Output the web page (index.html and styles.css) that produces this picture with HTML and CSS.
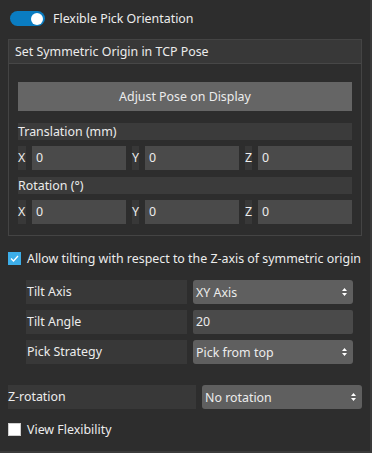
FILE: index.html
```html
<!DOCTYPE html>
<html lang="en">
<head>
  <meta charset="UTF-8" />
  <title>Flexible Pick Orientation</title>
  <link rel="stylesheet" href="styles.css">
</head>
<body>
  <div class="panel">

    <div class="toggle-row">
      <span class="toggle"><span class="knob"></span></span>
      <span>Flexible Pick Orientation</span>
    </div>

    <div class="group">
      <div class="group-title">Set Symmetric Origin in TCP Pose</div>
      <div class="group-body">
        <button class="btn">Adjust Pose on Display</button>

        <div class="sub-label">Translation (mm)</div>
        <div class="xyz">
          <span class="axis">X</span><span class="field">0</span>
          <span class="axis">Y</span><span class="field">0</span>
          <span class="axis">Z</span><span class="field">0</span>
        </div>

        <div class="sub-label rot">Rotation (°)</div>
        <div class="xyz">
          <span class="axis">X</span><span class="field">0</span>
          <span class="axis">Y</span><span class="field">0</span>
          <span class="axis">Z</span><span class="field">0</span>
        </div>
      </div>
    </div>

    <div class="check-row tilt-check">
      <span class="check on">
        <svg width="9" height="7" viewBox="0 0 9 7"><path d="M1 3.5 L3.5 6 L8 1" fill="none" stroke="#fff" stroke-width="1.3"/></svg>
      </span>
      <span>Allow tilting with respect to the Z-axis of symmetric origin</span>
    </div>

    <div class="tilt-grid">
      <div class="row-label">Tilt Axis</div>
      <div class="dropdown">XY Axis
        <svg width="5" height="8" viewBox="0 0 5 8"><path d="M2.5 0 L5 3 L0 3 Z M0 5 L5 5 L2.5 8 Z" fill="#fff"/></svg>
      </div>

      <div class="row-label">Tilt Angle</div>
      <div class="field value">20</div>

      <div class="row-label">Pick Strategy</div>
      <div class="dropdown">Pick from top
        <svg width="5" height="8" viewBox="0 0 5 8"><path d="M2.5 0 L5 3 L0 3 Z M0 5 L5 5 L2.5 8 Z" fill="#fff"/></svg>
      </div>
    </div>

    <div class="zrot-row">
      <div class="row-label">Z-rotation</div>
      <div class="dropdown">No rotation
        <svg width="5" height="8" viewBox="0 0 5 8"><path d="M2.5 0 L5 3 L0 3 Z M0 5 L5 5 L2.5 8 Z" fill="#fff"/></svg>
      </div>
    </div>

    <div class="check-row view-check">
      <span class="check"></span>
      <span>View Flexibility</span>
    </div>

  </div>
</body>
</html>
```

FILE: styles.css
```css
html, body {
  margin: 0;
  padding: 0;
}

body {
  width: 372px;
  height: 453px;
  background-color: #2d2d2d;
  font-family: 'Noto Sans', sans-serif;
  font-size: 12.4px;
  color: #ececec;
  overflow: hidden;
}

.panel {
  width: 372px;
  height: 453px;
  box-sizing: border-box;
  border-right: 2px solid #3a3a3a;
  border-bottom: 2px solid #3a3a3a;
  padding: 11px 8px 0 8px;
}

/* top switch */
.toggle-row {
  display: flex;
  align-items: center;
  gap: 8px;
  height: 15px;
  padding-left: 2px;
}

.toggle {
  display: flex;
  align-items: center;
  justify-content: flex-end;
  width: 35px;
  height: 15px;
  border-radius: 8px;
  background-color: #0a7cc1;
  padding: 0 2px;
  box-sizing: border-box;
}

.knob {
  width: 12px;
  height: 12px;
  border-radius: 50%;
  background: #fff;
}

/* group box */
.group {
  margin-top: 13px;
  width: 354px;
  box-sizing: border-box;
  border: 1px solid #444;
}

.group-title {
  height: 23px;
  line-height: 23px;
  padding-left: 6px;
  background-color: #383838;
  border-bottom: 1px solid #474747;
}

.group-body {
  padding: 18px 9px 11px 9px;
}

.btn {
  display: block;
  width: 100%;
  height: 29px;
  border: none;
  background-color: #656565;
  color: #ececec;
  font-family: inherit;
  font-size: inherit;
}

.sub-label {
  margin-top: 12px;
  height: 17px;
  line-height: 17px;
  background-color: #3b3b3b;
}

.sub-label.rot {
  margin-top: 7px;
}

.xyz {
  display: grid;
  grid-template-columns: 8px 1fr 7px 1fr 7px 1fr;
  gap: 6px;
  margin-top: 6px;
  height: 24px;
}

.axis {
  background-color: #383838;
  line-height: 24px;
}

.field {
  background-color: #4a4a4a;
  line-height: 24px;
  padding-left: 4px;
}

/* checkboxes */
.check-row {
  display: flex;
  align-items: center;
  gap: 6px;
  height: 13px;
}

.tilt-check {
  margin-top: 16px;
}

.view-check {
  margin-top: 14px;
}

.check {
  display: flex;
  align-items: center;
  justify-content: center;
  width: 13px;
  height: 13px;
  box-sizing: border-box;
  background: #fff;
  border: 1px solid #cfcfcf;
}

.check.on {
  background: #3daee9;
  border-color: #3daee9;
}

/* tilt options */
.tilt-grid {
  display: grid;
  grid-template-columns: 161px 160px;
  column-gap: 6px;
  row-gap: 6px;
  margin-top: 15px;
  margin-left: 18px;
}

.row-label {
  height: 24px;
  line-height: 24px;
  padding-left: 1px;
  background-color: #383838;
}

.value {
  padding-left: 3px;
  border-radius: 2px;
}

.dropdown {
  display: flex;
  align-items: center;
  justify-content: space-between;
  height: 24px;
  padding: 0 6px 0 3px;
  border-radius: 3px;
  background-color: #5f5f5f;
}

.zrot-row {
  display: grid;
  grid-template-columns: 188px 160px;
  column-gap: 6px;
  margin-top: 21px;
}

.zrot-row .row-label {
  padding-left: 0;
}
```
